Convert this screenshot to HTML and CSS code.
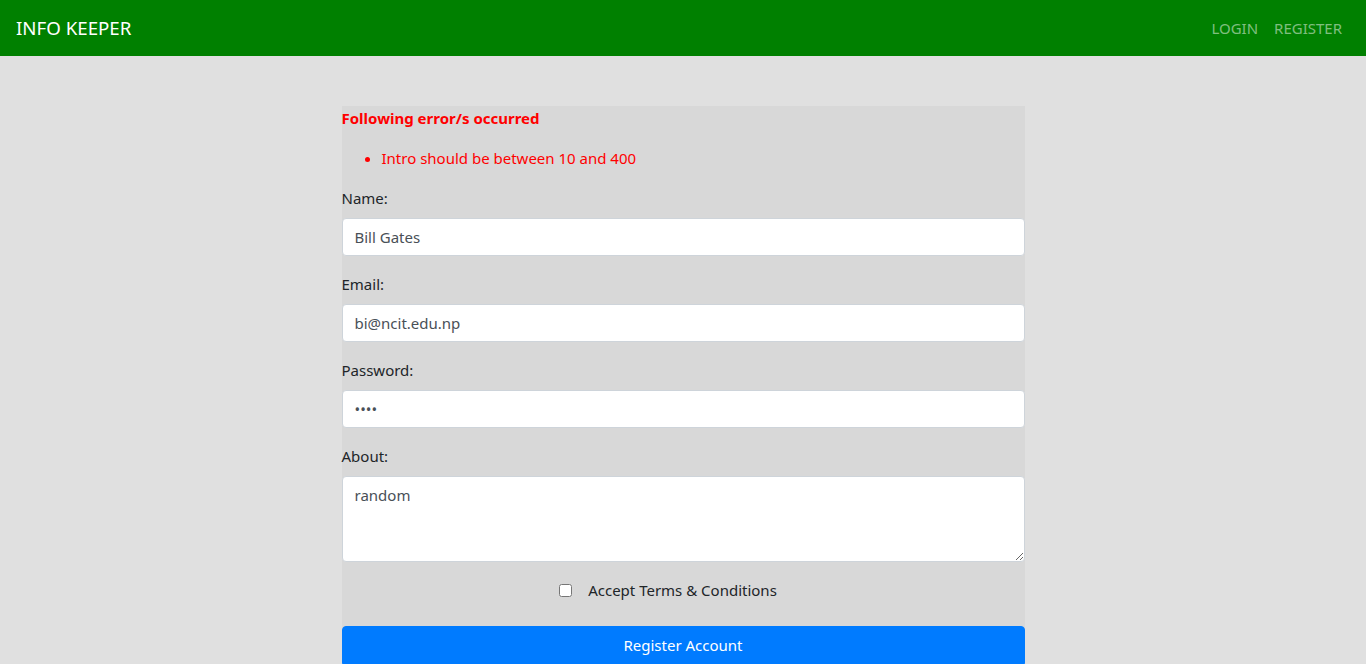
FILE: index.html
```html
<!DOCTYPE html>
<html>
<head>
<meta charset="utf-8">
<link rel="stylesheet" href="styles.css">
</head>
<body>
<nav class="navbar">
  <a class="brand" href="#">INFO KEEPER</a>
  <ul class="nav-links">
    <li><a href="#">LOGIN</a></li>
    <li><a href="#">REGISTER</a></li>
  </ul>
</nav>
<main class="container">
  <form class="reg-form">
    <div class="errors">
      <h6 class="error-title">Following error/s occurred</h6>
      <ul class="error-list">
        <li>Intro should be between 10 and 400</li>
      </ul>
    </div>
    <div class="form-group">
      <label>Name:</label>
      <input class="form-control" type="text" value="Bill Gates">
    </div>
    <div class="form-group">
      <label>Email:</label>
      <input class="form-control" type="text" value="bi@ncit.edu.np">
    </div>
    <div class="form-group">
      <label>Password:</label>
      <input class="form-control" type="password" value="1234">
    </div>
    <div class="form-group">
      <label>About:</label>
      <textarea class="form-control textarea" rows="3">random</textarea>
    </div>
    <div class="form-group check-row">
      <input type="checkbox" class="check">
      <label class="check-label">Accept Terms &amp; Conditions</label>
    </div>
    <button type="button" class="btn">Register Account</button>
  </form>
</main>
</body>
</html>
```

FILE: styles.css
```css
* { box-sizing: border-box; }
html, body { margin: 0; padding: 0; }
body {
  font-family: "Segoe UI", "Noto Sans", Lato, sans-serif;
  font-size: 15px;
  line-height: 24px;
  color: #212529;
  background: #e0e0e0;
  height: 664px;
  overflow: hidden;
}
.navbar {
  height: 56px;
  background: #008000;
  display: flex;
  align-items: center;
  justify-content: space-between;
  padding: 0 16px;
}
.brand {
  color: #fff;
  text-decoration: none;
  font-size: 18.7px;
  line-height: 30px;
}
.nav-links {
  list-style: none;
  display: flex;
  margin: 0;
  padding: 0;
}
.nav-links a {
  display: block;
  padding: 8px 8px;
  color: rgba(255,255,255,0.5);
  text-decoration: none;
  font-size: 15px;
}
.container {
  width: 683px;
  margin: 50px auto 0;
  background: #d8d8d8;
}
.reg-form { margin: 0; }
.error-title {
  margin: 0 0 16px;
  font-size: 15px;
  line-height: 24px;
  font-weight: 700;
  color: #ff0000;
}
.error-list {
  margin: 0 0 16px;
  padding-left: 40px;
  color: #ff0000;
}
.form-group { margin-bottom: 16px; }
label {
  display: inline-block;
  margin-bottom: 8px;
}
.form-control {
  display: block;
  width: 100%;
  height: 38px;
  padding: 6px 12px;
  font-family: inherit;
  font-size: 15px;
  line-height: 24px;
  color: #495057;
  background: #fff;
  border: 1px solid #ced4da;
  border-radius: 4px;
  margin: 0;
}
.textarea {
  height: 86px;
  resize: vertical;
}
.check-row {
  display: flex;
  justify-content: center;
  align-items: center;
  height: 24px;
  margin-bottom: 24px;
  padding-right: 30px;
}
.check {
  margin: 0 16px 0 0;
  width: 13px;
  height: 13px;
}
.check-label { margin: 0; }
.btn {
  display: block;
  width: 100%;
  height: 38px;
  border: 1px solid #007bff;
  background: #007bff;
  color: #fff;
  font-family: inherit;
  font-size: 15px;
  line-height: 24px;
  border-radius: 4px 4px 0 0;
  padding: 6px 12px;
}
```
